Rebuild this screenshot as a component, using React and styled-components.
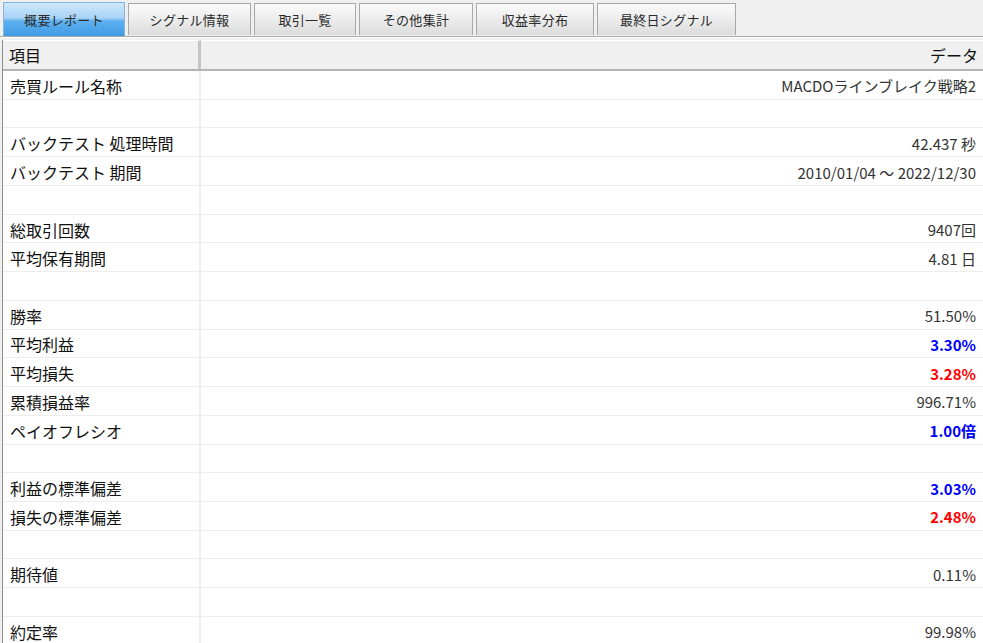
import React from "react";
import styled, { createGlobalStyle } from "styled-components";

const Global = createGlobalStyle`
  html, body { margin: 0; padding: 0; background: #f0f0f0; overflow: hidden; }
  body { font-family: "Noto Sans CJK JP", "Noto Sans", sans-serif; }
`;

const Page = styled.div`
  width: 983px;
  height: 643px;
  overflow: hidden;
  background: #f0f0f0;
  display: flex;
  flex-direction: column;
`;

const TabBar = styled.div`
  display: flex;
  flex-shrink: 0;
  align-items: flex-end;
  height: 37px;
  padding-left: 3px;
  gap: 3px;
  border-bottom: 1px solid #a9a9a9;
  box-sizing: border-box;
`;

const Tab = styled.div`
  box-sizing: border-box;
  width: ${(p) => p.$w}px;
  height: ${(p) => (p.$active ? 34 : 32)}px;
  display: flex;
  align-items: center;
  justify-content: center;
  font-size: 13px;
  letter-spacing: 0.3px;
  color: #2a2a2a;
  border: 1px solid ${(p) => (p.$active ? "#7fb4e0" : "#a8a8a8")};
  border-bottom: none;
  background: ${(p) =>
    p.$active
      ? "linear-gradient(#cfe8fc 0%, #a9d3f7 45%, #5eb0ee 55%, #3f9be6 100%)"
      : "linear-gradient(#fafafa 0%, #ececec 50%, #dcdcdc 100%)"};
  margin-bottom: ${(p) => (p.$active ? 0 : 1)}px;
`;

const Gap = styled.div`
  flex-shrink: 0;
  height: 3px;
  border-top: 1px solid #ffffff;
  box-sizing: border-box;
`;

const Table = styled.div`
  flex-shrink: 0;
  margin-left: 2px;
  border-left: 1px solid #8c8c8c;
  background: #ffffff;
`;

const HeaderRow = styled.div`
  display: grid;
  grid-template-columns: 198px 1fr;
  height: 31px;
  box-sizing: border-box;
  background: #f0f0f0;
  border-bottom: 2px solid #b4b4b4;
`;

const HeaderCell = styled.div`
  display: flex;
  align-items: center;
  justify-content: ${(p) => (p.$right ? "flex-end" : "flex-start")};
  padding: ${(p) => (p.$right ? "0 5px 0 0" : "0 0 0 6px")};
  font-size: 16px;
  color: #111;
  border-right: ${(p) => (p.$right ? "none" : "3px solid #c4c4c4")};
  border-top: 1px solid #ffffff;
  box-sizing: border-box;
`;

const Row = styled.div`
  display: grid;
  grid-template-columns: 198px 1fr;
  height: 28.74px;
  box-sizing: border-box;
  border-bottom: 1px solid #ededed;
`;

const Label = styled.div`
  display: flex;
  align-items: center;
  padding-left: 7px;
  padding-top: 2px;
  font-size: 16px;
  color: #111;
  border-right: 2px solid #efefef;
  white-space: nowrap;
`;

const Value = styled.div`
  display: flex;
  align-items: center;
  justify-content: flex-end;
  padding-right: 7px;
  padding-top: 2px;
  font-size: 15px;
  white-space: nowrap;
  color: ${(p) => (p.$tone === "blue" ? "#0000ff" : p.$tone === "red" ? "#ff0000" : "#333333")};
  font-weight: ${(p) => (p.$tone ? 700 : 400)};
`;

const tabs = [
  { t: "概要レポート", w: 122, active: true },
  { t: "シグナル情報", w: 123 },
  { t: "取引一覧", w: 102 },
  { t: "その他集計", w: 114 },
  { t: "収益率分布", w: 118 },
  { t: "最終日シグナル", w: 139 },
];

const rows = [
  ["売買ルール名称", "MACDOラインブレイク戦略2"],
  ["", ""],
  ["バックテスト 処理時間", "42.437 秒"],
  ["バックテスト 期間", "2010/01/04 ～ 2022/12/30"],
  ["", ""],
  ["総取引回数", "9407回"],
  ["平均保有期間", "4.81 日"],
  ["", ""],
  ["勝率", "51.50%"],
  ["平均利益", "3.30%", "blue"],
  ["平均損失", "3.28%", "red"],
  ["累積損益率", "996.71%"],
  ["ペイオフレシオ", "1.00倍", "blue"],
  ["", ""],
  ["利益の標準偏差", "3.03%", "blue"],
  ["損失の標準偏差", "2.48%", "red"],
  ["", ""],
  ["期待値", "0.11%"],
  ["", ""],
  ["約定率", "99.98%"],
];

export default function App() {
  return (
    <Page>
      <Global />
      <TabBar>
        {tabs.map((x) => (
          <Tab key={x.t} $w={x.w} $active={x.active}>
            {x.t}
          </Tab>
        ))}
      </TabBar>
      <Gap />
      <Table>
        <HeaderRow>
          <HeaderCell>項目</HeaderCell>
          <HeaderCell $right>データ</HeaderCell>
        </HeaderRow>
        {rows.map(([l, v, tone], i) => (
          <Row key={i}>
            <Label>{l}</Label>
            <Value $tone={tone}>{v}</Value>
          </Row>
        ))}
      </Table>
    </Page>
  );
}
